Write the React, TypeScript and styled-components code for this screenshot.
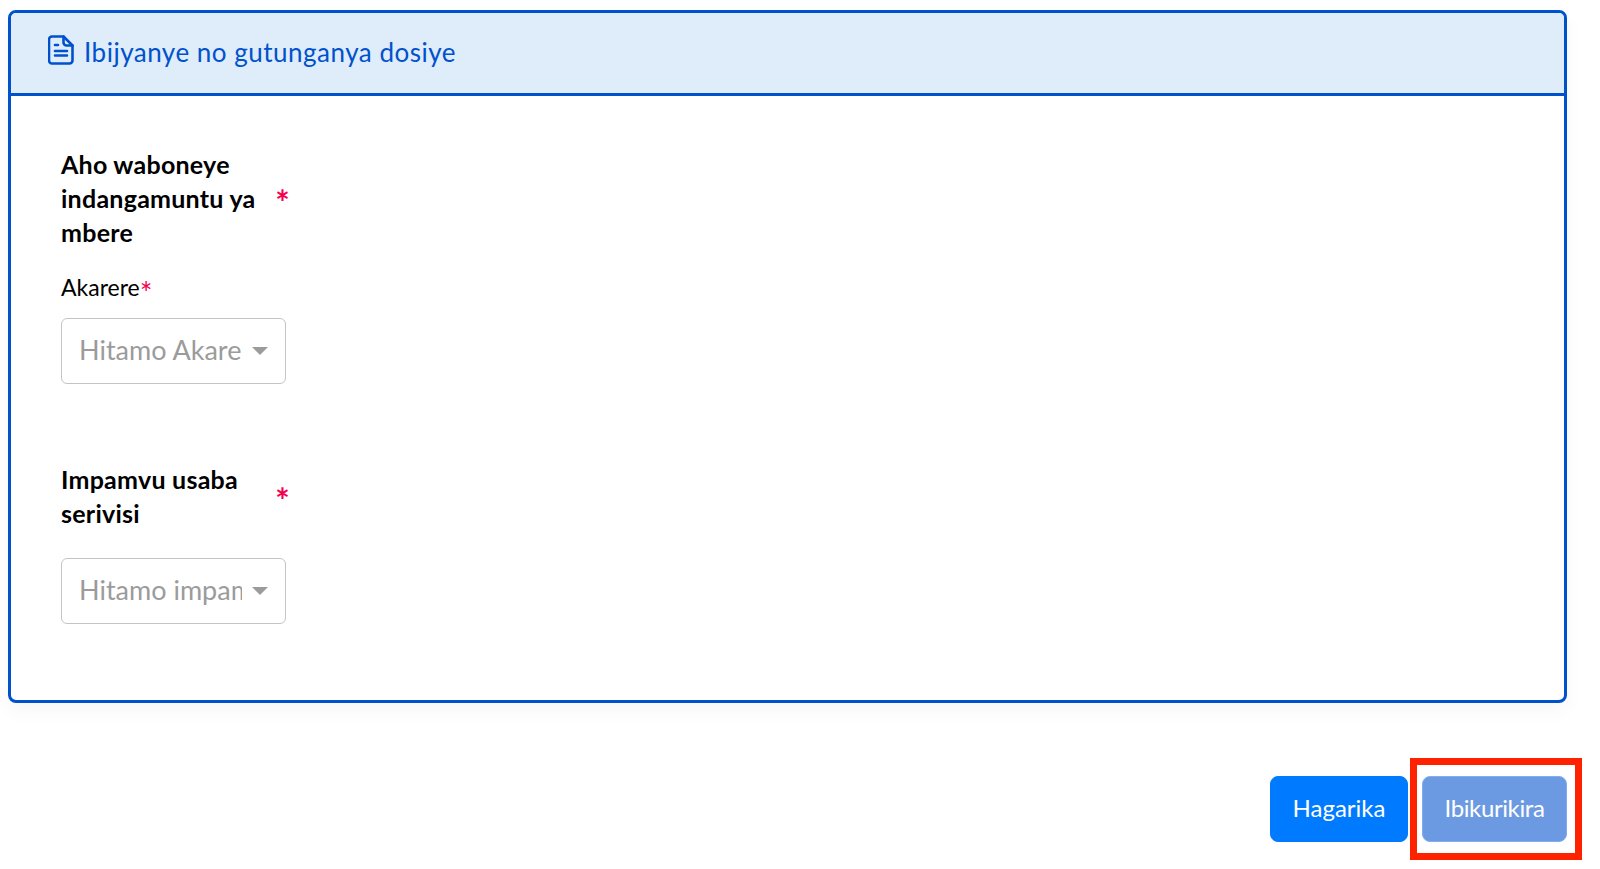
import React from "react";
import styled, { createGlobalStyle } from "styled-components";

const Global = createGlobalStyle`
  html, body { margin: 0; padding: 0; background: #fff; }
  body { font-family: "Lato", "Open Sans", "Liberation Sans", sans-serif; color: #000; }
`;

const Page = styled.div`
  position: relative;
  width: 1600px;
  height: 869px;
  padding: 10px 33px 0 8px;
  box-sizing: border-box;
  overflow: hidden;
`;

const Card = styled.section`
  height: 693px;
  box-sizing: border-box;
  border: 3px solid #0052cc;
  border-radius: 8px;
  box-shadow: 0 8px 20px rgba(0, 0, 0, 0.035);
  overflow: hidden;
`;

const CardHeader = styled.header`
  display: flex;
  align-items: center;
  gap: 10px;
  height: 83px;
  box-sizing: border-box;
  padding: 0 0 2px 37px;
  background: #dfecf9;
  border-bottom: 3px solid #0052cc;
  color: #0052cc;
  font-size: 26px;
`;

const HeaderTitle = styled.span`
  display: block;
  letter-spacing: 0.5px;
`;

const HeaderIcon = styled.svg`
  margin-top: -5px;
`;

const CardBody = styled.div`
  display: flex;
  flex-direction: column;
  width: 225px;
  padding: 51px 0 0 50px;
`;

const GroupLabel = styled.div`
  display: flex;
  align-items: center;
  justify-content: space-between;
  width: 225px;
  font-size: 25px;
  font-weight: 700;
  line-height: 34px;
  letter-spacing: 0.25px;
`;

const GroupText = styled.span`
  width: 205px;
`;

const Required = styled.span`
  color: #f5004f;
  font-size: 34px;
  font-weight: 700;
  line-height: 1;
  margin: 7px -4px 0 0;
`;

const FieldLabel = styled.div`
  margin-top: 21px;
  font-size: 23px;
  line-height: 34px;
`;

const RedStar = styled.span`
  color: #f5004f;
  font-size: 30px;
  line-height: 0;
  vertical-align: -8px;
`;

const Select = styled.div<{ $top: number }>`
  display: flex;
  align-items: center;
  justify-content: space-between;
  width: 225px;
  height: 66px;
  box-sizing: border-box;
  margin-top: ${(p) => p.$top}px;
  padding: 0 17px 0 17px;
  border: 1.5px solid #c4c4c4;
  border-radius: 6px;
  color: #9b9b9b;
  font-size: 27px;
  background: #fff;
`;

const SelectValue = styled.span`
  width: 163px;
  margin-top: -4px;
  overflow: hidden;
  white-space: nowrap;
`;

const Caret = styled.span`
  width: 0;
  height: 0;
  border-left: 8px solid transparent;
  border-right: 8px solid transparent;
  border-top: 8px solid #9b9b9b;
`;

const Gap = styled.div`
  height: 78px;
`;

const Actions = styled.div`
  display: flex;
  justify-content: flex-end;
  gap: 14px;
  margin-top: 73px;
`;

const Button = styled.button<{ $muted?: boolean }>`
  height: 66px;
  width: ${(p) => (p.$muted ? "145px" : "138px")};
  padding: 0 0 4px;
  border: 1px solid ${(p) => (p.$muted ? "#7fadf0" : "#007bff")};
  border-radius: 8px;
  background: ${(p) => (p.$muted ? "#6c9ae2" : "#007bff")};
  color: #fff;
  font-family: inherit;
  font-size: 24px;
  letter-spacing: ${(p) => (p.$muted ? "-0.4px" : "0")};
`;

const Highlight = styled.div`
  position: absolute;
  left: 1410px;
  top: 758px;
  width: 172px;
  height: 102px;
  box-sizing: border-box;
  border: 7px solid #ff2200;
  pointer-events: none;
`;

export default function App() {
  return (
    <Page>
      <Global />
      <Card>
        <CardHeader>
          <HeaderIcon width="26" height="30" viewBox="0 0 26 30" fill="none" stroke="#0052cc" strokeWidth="2.6" strokeLinejoin="round" strokeLinecap="round">
            <path d="M4 1.500h11.500l9 9V25.500a3 3 0 0 1-3 3H4a3 3 0 0 1-3-3V4.500a3 3 0 0 1 3-3z" />
            <path d="M15.500 1.500v6a3 3 0 0 0 3 3h6" />
            <path d="M7 10h3M7 16h12M7 20.500h12" />
          </HeaderIcon>
          <HeaderTitle>Ibijyanye no gutunganya dosiye</HeaderTitle>
        </CardHeader>
        <CardBody>
          <GroupLabel>
            <GroupText>Aho waboneye indangamuntu ya mbere</GroupText>
            <Required>*</Required>
          </GroupLabel>
          <FieldLabel>
            Akarere<RedStar>*</RedStar>
          </FieldLabel>
          <Select $top={14}>
            <SelectValue>Hitamo Akarere</SelectValue>
            <Caret />
          </Select>
          <Gap />
          <GroupLabel>
            <GroupText>Impamvu usaba serivisi</GroupText>
            <Required>*</Required>
          </GroupLabel>
          <Select $top={28}>
            <SelectValue>Hitamo impamvu</SelectValue>
            <Caret />
          </Select>
        </CardBody>
      </Card>
      <Actions>
        <Button>Hagarika</Button>
        <Button $muted>Ibikurikira</Button>
      </Actions>
      <Highlight />
    </Page>
  );
}
